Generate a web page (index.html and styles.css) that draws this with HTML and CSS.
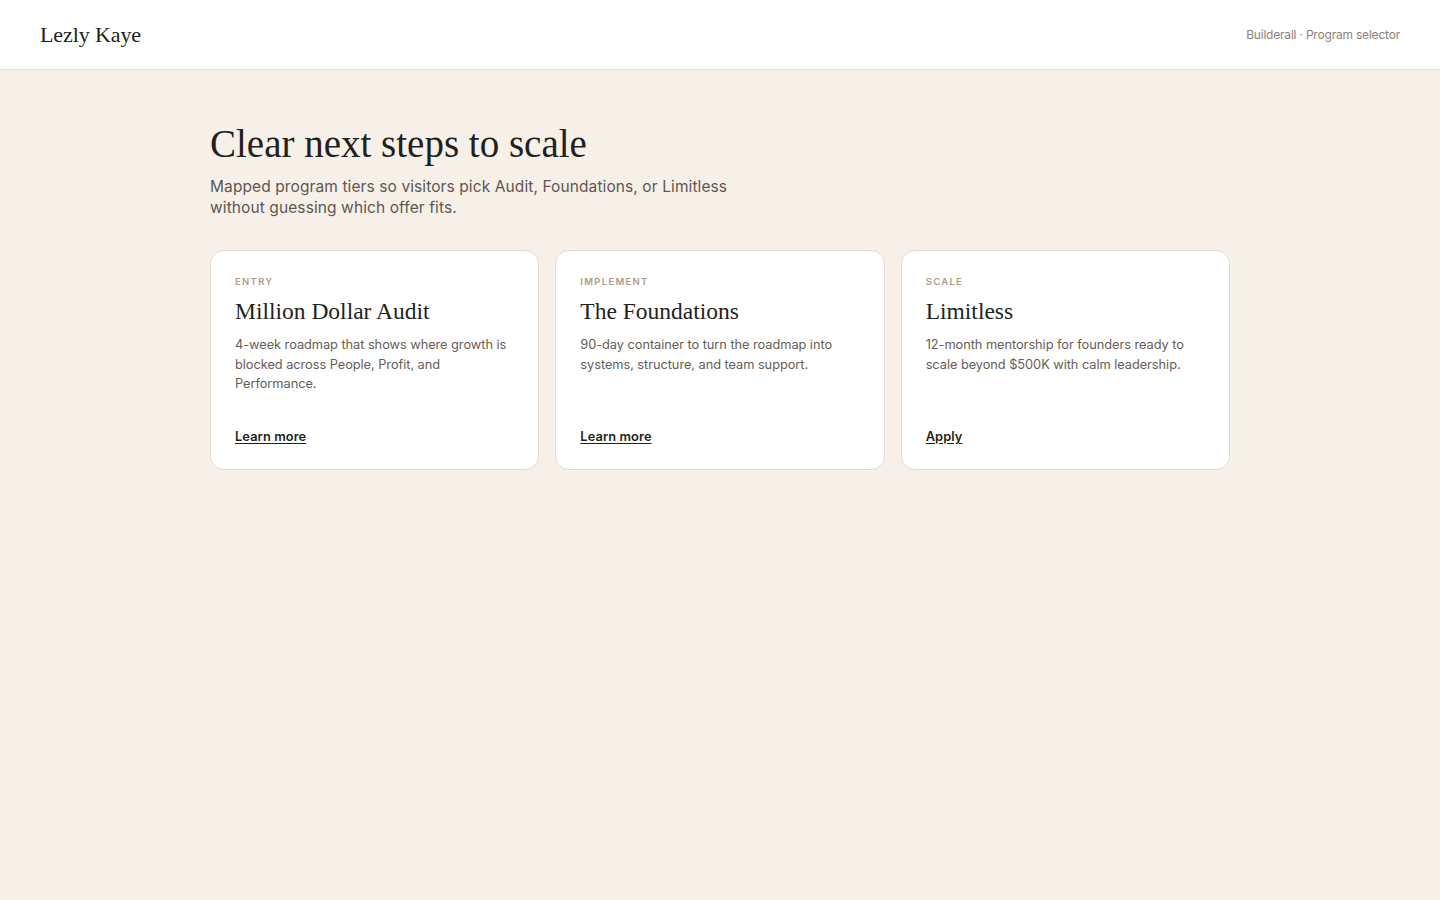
FILE: index.html
```html
<!DOCTYPE html>
<html lang="en">
<head>
<meta charset="utf-8">
<title>Lezly Kaye · Program selector</title>
<link rel="stylesheet" href="styles.css">
</head>
<body>
<header class="topbar">
  <div class="brand">Lezly Kaye</div>
  <div class="crumb">Builderall · Program selector</div>
</header>
<main class="wrap">
  <h1 class="title">Clear next steps to scale</h1>
  <p class="lede">Mapped program tiers so visitors pick Audit, Foundations, or Limitless without guessing which offer fits.</p>
  <section class="cards">
    <article class="card">
      <div class="tag">Entry</div>
      <h2 class="card-title">Million Dollar Audit</h2>
      <p class="card-text">4-week roadmap that shows where growth is blocked across People, Profit, and Performance.</p>
      <a class="card-link" href="#">Learn more</a>
    </article>
    <article class="card">
      <div class="tag">Implement</div>
      <h2 class="card-title">The Foundations</h2>
      <p class="card-text">90-day container to turn the roadmap into systems, structure, and team support.</p>
      <a class="card-link" href="#">Learn more</a>
    </article>
    <article class="card">
      <div class="tag">Scale</div>
      <h2 class="card-title">Limitless</h2>
      <p class="card-text">12-month mentorship for founders ready to scale beyond $500K with calm leadership.</p>
      <a class="card-link" href="#">Apply</a>
    </article>
  </section>
</main>
</body>
</html>
```
FILE: styles.css
```css
* { box-sizing: border-box; }
html, body { margin: 0; padding: 0; }
body {
  background: #f7f0e9;
  font-family: "Inter", "Noto Sans", sans-serif;
  color: #2a2420;
  min-height: 100vh;
}
.topbar {
  height: 70px;
  background: #ffffff;
  border-bottom: 1px solid #e6ded6;
  display: flex;
  align-items: center;
  justify-content: space-between;
  padding: 0 40px;
}
.brand {
  font-family: "Liberation Serif", "DejaVu Serif", serif;
  font-size: 22px;
  color: #231f1c;
  letter-spacing: -0.1px;
}
.crumb {
  font-size: 12px;
  color: #8c827a;
  letter-spacing: -0.2px;
}
.wrap {
  width: 1020px;
  margin: 0 auto;
  padding-top: 52px;
}
.title {
  font-family: "Liberation Serif", "DejaVu Serif", serif;
  font-weight: 400;
  font-size: 39px;
  line-height: 44px;
  margin: 0;
  color: #231f1c;
  letter-spacing: 0;
}
.lede {
  margin: 10px 0 0;
  max-width: 540px;
  font-size: 15.5px;
  line-height: 21px;
  color: #5f5650;
  letter-spacing: 0.1px;
}
.cards {
  margin-top: 32px;
  display: grid;
  grid-template-columns: repeat(3, 1fr);
  gap: 16px;
}
.card {
  background: #ffffff;
  border: 1px solid #e4dad1;
  border-radius: 14px;
  padding: 25px 24px 23px;
  min-height: 220px;
  display: flex;
  flex-direction: column;
}
.tag {
  font-size: 9.5px;
  font-weight: 600;
  letter-spacing: 1.3px;
  text-transform: uppercase;
  color: #b39a85;
  line-height: 12px;
}
.card-title {
  font-family: "Liberation Serif", "DejaVu Serif", serif;
  font-weight: 400;
  font-size: 23.5px;
  line-height: 30px;
  margin: 8px 0 0;
  color: #231f1c;
  letter-spacing: 0;
}
.card-text {
  margin: 9px 0 0;
  font-size: 12.8px;
  line-height: 19.5px;
  color: #665d56;
  letter-spacing: -0.05px;
}
.card-link {
  margin-top: auto;
  font-size: 12.8px;
  font-weight: 600;
  color: #231f1c;
  text-decoration: underline;
  text-underline-offset: 2px;
  line-height: 18px;
  align-self: flex-start;
  letter-spacing: 0.1px;
}
```
